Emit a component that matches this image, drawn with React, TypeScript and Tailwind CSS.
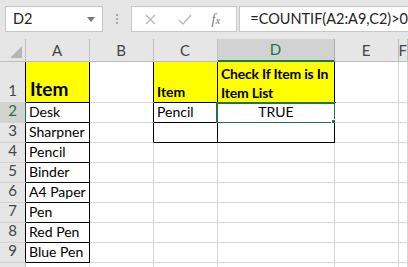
import React from 'react';

type Cell = {
  text?: string;
  lines?: string[];
  bold?: boolean;
  big?: boolean;
  fill?: boolean;
  center?: boolean;
  right?: string;
  bottom?: string;
};

const GRID = 'border-[#d4d4d4]';
const BLACK = 'border-black';

const colWidths = ['w-[64px]', 'w-[64px]', 'w-[64px]', 'w-[117px]', 'w-[64px]', 'flex-1'];
const colLabels = ['A', 'B', 'C', 'D', 'E', 'F'];

const items = ['Desk', 'Sharpner', 'Pencil', 'Binder', 'A4 Paper', 'Pen', 'Red Pen', 'Blue Pen'];

function buildRows(): Cell[][] {
  const rows: Cell[][] = [];
  rows.push([
    { text: 'Item', bold: true, big: true, fill: true, right: BLACK, bottom: BLACK },
    { right: BLACK },
    { text: 'Item', bold: true, fill: true, right: BLACK, bottom: BLACK },
    { lines: ['Check If Item is In', 'Item List'], bold: true, fill: true, right: BLACK, bottom: BLACK },
    {},
    {},
  ]);
  items.forEach((item, i) => {
    const inBox = i < 2;
    rows.push([
      { text: item, right: BLACK, bottom: BLACK },
      inBox ? { right: BLACK } : {},
      inBox ? { text: i === 0 ? 'Pencil' : '', right: BLACK, bottom: BLACK } : {},
      inBox ? { text: i === 0 ? 'TRUE' : '', center: true, right: BLACK, bottom: BLACK } : {},
      {},
      {},
    ]);
  });
  return rows;
}

function TopBar() {
  return (
    <div className="h-[39px] bg-[#e6e6e6] flex items-start pt-[6px] pl-[5px]">
      <div className="w-[102px] h-[26px] bg-white border border-[#c6c6c6] flex items-center justify-between pl-[7px] pr-[7px]">
        <span className="text-[14.5px] text-[#222]">D2</span>
        <svg width="8" height="5" viewBox="0 0 8 5">
          <path d="M0 0 L8 0 L4 5 Z" fill="#777" />
        </svg>
      </div>
      <div className="w-[30px] h-[26px] flex flex-col items-center justify-center gap-[2px]">
        <span className="w-[2px] h-[2px] bg-[#a8a8a8]" />
        <span className="w-[2px] h-[2px] bg-[#a8a8a8]" />
        <span className="w-[2px] h-[2px] bg-[#a8a8a8]" />
      </div>
      <div className="w-[111px] h-[26px] bg-white border border-[#c6c6c6] flex items-center">
        <svg className="ml-[13px]" width="11" height="11" viewBox="0 0 11 11">
          <path d="M1 1 L10 10 M10 1 L1 10" stroke="#b8b8b8" strokeWidth="1.4" />
        </svg>
        <svg className="ml-[22px]" width="14" height="11" viewBox="0 0 14 11">
          <path d="M1 6 L5 10 L13 1" stroke="#b8b8b8" strokeWidth="1.4" fill="none" />
        </svg>
        <span className="ml-[19px] text-[14px] italic text-[#777] font-['Liberation_Serif',serif]">
          f<span className="text-[11px]">x</span>
        </span>
      </div>
      <div className="ml-[2px] flex-1 h-[26px] bg-white border border-r-0 border-[#c6c6c6] flex items-center pl-[10px]">
        <span className="text-[14.5px] text-[#222] whitespace-nowrap">=COUNTIF(A2:A9,C2)&gt;0</span>
      </div>
    </div>
  );
}

function HeaderRow() {
  return (
    <div className="h-[23px] flex">
      <div className="w-[26px] bg-[#e6e6e6] border-r border-b border-[#bdbdbd] flex items-end justify-end p-[3px]">
        <svg width="12" height="12" viewBox="0 0 12 12">
          <path d="M12 0 L12 12 L0 12 Z" fill="#b6b6b6" />
        </svg>
      </div>
      {colLabels.map((label, i) => {
        const selected = label === 'D';
        return (
          <div
            key={label}
            className={`${colWidths[i]} shrink-0 flex items-center justify-center text-[15px] border-r ${
              selected
                ? 'bg-[#d2d2d2] text-[#217346] border-[#ababab] border-b-2 border-b-[#217346]'
                : 'bg-[#e6e6e6] text-[#444] border-[#bdbdbd] border-b'
            }`}
          >
            {label}
          </div>
        );
      })}
    </div>
  );
}

export default function App() {
  const rows = buildRows();
  return (
    <div className="w-[408px] h-[267px] overflow-hidden bg-white font-['Lato',sans-serif]">
      <TopBar />
      <HeaderRow />
      {rows.map((row, r) => {
        const n = r + 1;
        const selectedRow = n === 2;
        return (
          <div key={n} className={`flex ${n === 1 ? 'h-[41px]' : 'h-[20px]'}`}>
            <div
              className={`w-[26px] shrink-0 flex items-end justify-center pb-[1px] text-[15px] border-b border-r ${
                selectedRow
                  ? 'bg-[#d2d2d2] text-[#217346] border-b-[#d4d4d4] border-r-[#217346]'
                  : 'bg-[#e6e6e6] text-[#444] border-b-[#d4d4d4] border-r-black'
              }`}
            >
              {n}
            </div>
            {row.map((cell, c) => {
              const isSel = n === 2 && c === 3;
              return (
                <div
                  key={c}
                  className={`${colWidths[c]} shrink-0 relative flex border-r border-b ${cell.right ? 'border-r-black' : 'border-r-[#d4d4d4]'} ${
                    cell.bottom ? 'border-b-black' : 'border-b-[#d4d4d4]'
                  } ${cell.fill ? 'bg-[#ffff00]' : 'bg-white'} ${cell.center ? 'justify-center' : 'pl-[3px]'} ${
                    cell.lines ? 'items-center' : 'items-end pb-[1px]'
                  }`}
                >
                  {cell.text ? (
                    <span
                      className={`${cell.big ? 'text-[19px] leading-[24px] pl-[1px]' : 'text-[14px] leading-[18px]'} ${
                        cell.bold ? 'font-bold' : ''
                      } whitespace-nowrap text-black`}
                    >
                      {cell.text}
                    </span>
                  ) : null}
                  {cell.lines ? (
                    <div className="flex flex-col text-[14px] leading-[19px] font-bold text-black whitespace-nowrap tracking-[-0.2px] pt-[1px]">
                      {cell.lines.map((line) => (
                        <span key={line}>{line}</span>
                      ))}
                    </div>
                  ) : null}
                  {isSel ? (
                    <>
                      <div className="absolute -top-px -left-[2px] -right-[2px] -bottom-[2px] border-2 border-[#217346] pointer-events-none" />
                      <div className="absolute -right-[4px] -bottom-[4px] w-[7px] h-[7px] bg-[#217346] border border-white" />
                    </>
                  ) : null}
                </div>
              );
            })}
          </div>
        );
      })}
      <div className="flex h-[20px]">
        <div className="w-[26px] shrink-0 bg-[#e6e6e6] border-r border-[#bdbdbd]" />
        {colWidths.map((w, c) => (
          <div key={c} className={`${w} shrink-0 border-r ${GRID}`} />
        ))}
      </div>
    </div>
  );
}
